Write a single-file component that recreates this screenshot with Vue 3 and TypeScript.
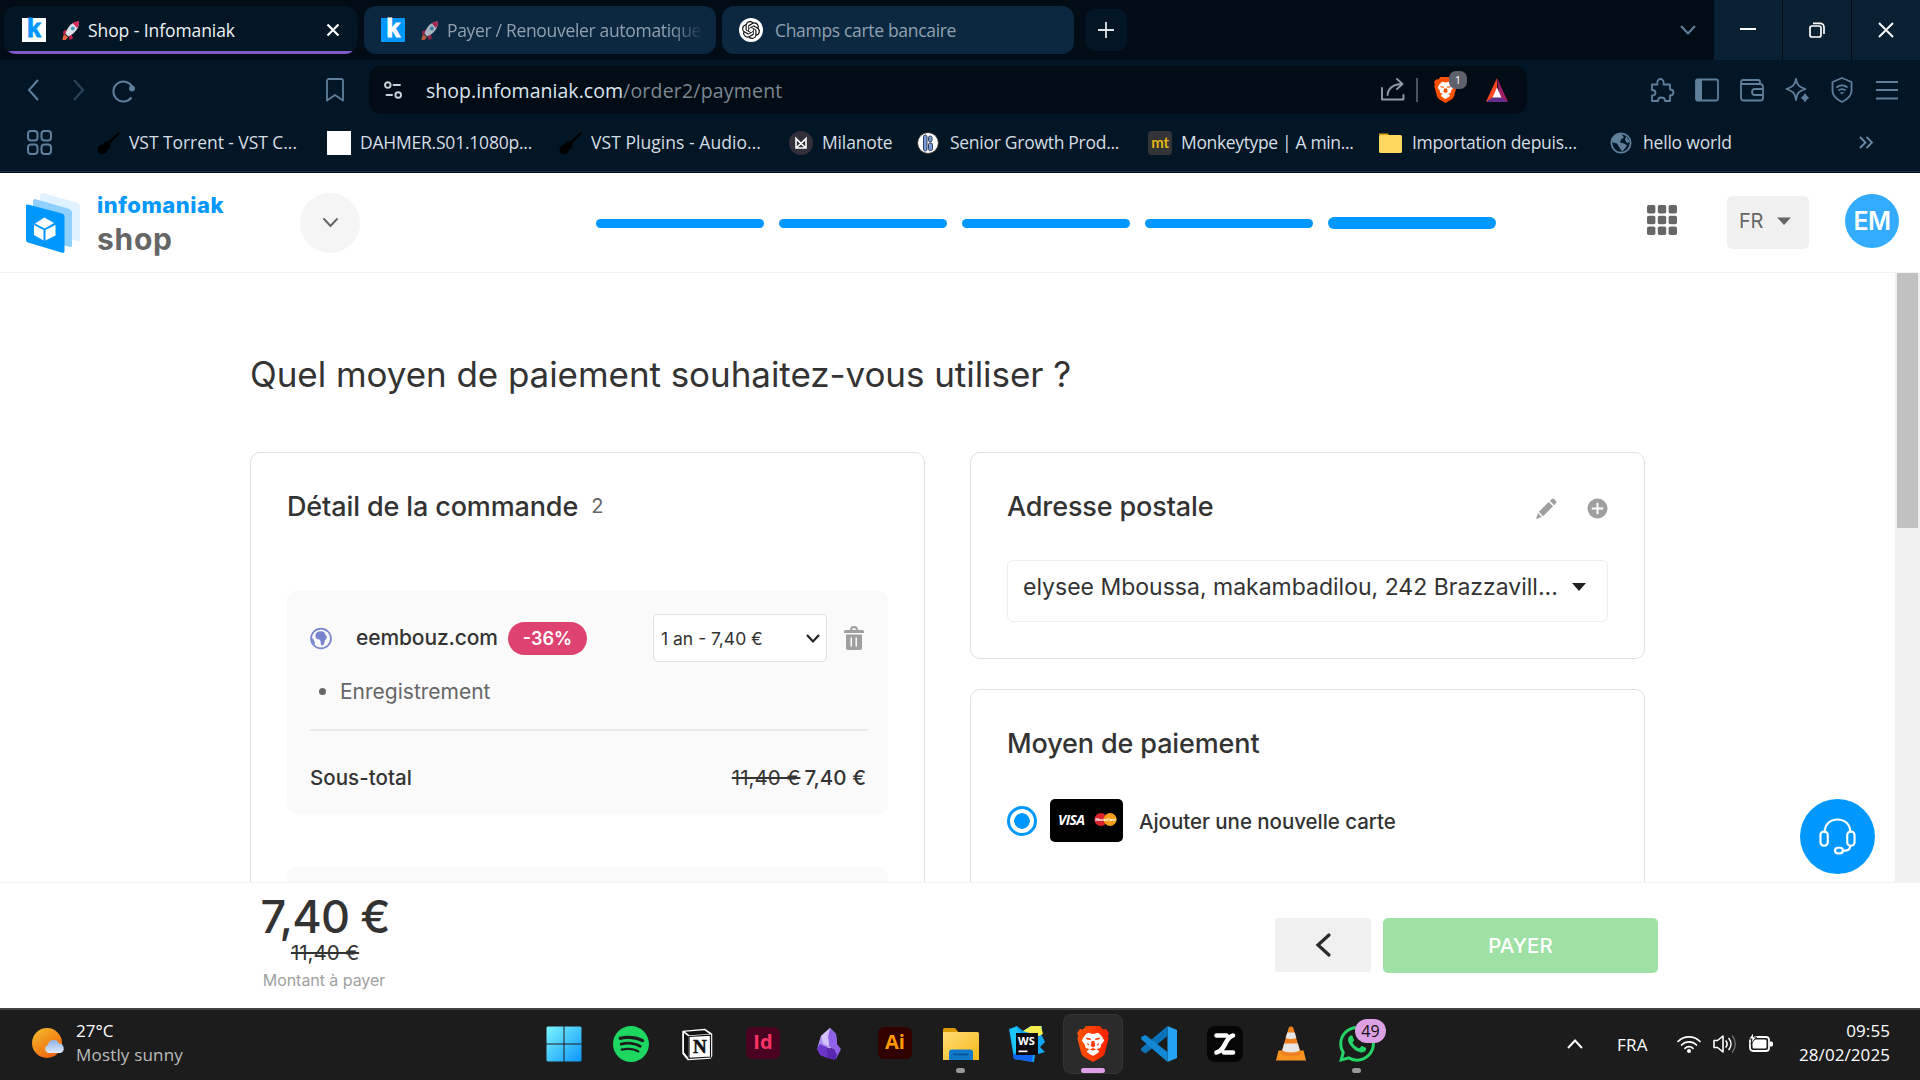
<script setup lang="ts">
interface Bookmark {
  icon: string
  label: string
  width: number
  tracking: number
}

const bookmarks: Bookmark[] = [
  { icon: 'guitar', label: 'VST Torrent - VST C...', width: 231, tracking: -0.06 },
  { icon: 'blank', label: 'DAHMER.S01.1080p...', width: 231, tracking: -0.22 },
  { icon: 'guitar', label: 'VST Plugins - Audio...', width: 231, tracking: 0.05 },
  { icon: 'milanote', label: 'Milanote', width: 128, tracking: -0.15 },
  { icon: 'senior', label: 'Senior Growth Prod...', width: 231, tracking: -0.28 },
  { icon: 'monkey', label: 'Monkeytype | A min...', width: 231, tracking: -0.35 },
  { icon: 'folder', label: 'Importation depuis...', width: 231, tracking: -0.27 },
  { icon: 'globe', label: 'hello world', width: 160, tracking: -0.2 },
]

const taskIcons = ['windows', 'spotify', 'notion', 'indesign', 'obsidian', 'illustrator', 'explorer', 'webstorm', 'brave', 'vscode', 'zed', 'vlc', 'whatsapp']

const steps = [1, 2, 3, 4, 5]
</script>

<template>
  <div class="screen">
    <header class="tabstrip">
      <div class="tab active">
        <span class="fav light">k</span>
        <svg class="rocket" viewBox="0 0 18 20"><path d="M4 9L1 11l.5 4L6 12zM10 14.500l1 3.500-3.500 1.500-.5-5z" fill="#c6224e" /><path d="M17 1C11 1 6 5 3.500 13l2.500 3C13 13 17 8 17 1z" fill="#dfe3ea" /><path d="M17 1c-2.500 0-4.500.6-6.300 1.800L15 7.500C16.300 5.700 17 3.500 17 1z" fill="#d8275a" /><circle cx="10.800" cy="8" r="2" fill="#4b9ac4" /><path d="M3 14l3 3-2.500 2.500L.5 19.500 1 16z" fill="#f2683c" /></svg>
        <span class="tabtext">Shop - Infomaniak</span>
        <svg class="tabclose" viewBox="0 0 14 14"><path d="M1.500 1.500l11 11M12.500 1.500l-11 11" stroke="#fff" stroke-width="2.200" /></svg>
      </div>
      <div class="tab">
        <span class="fav dark">k</span>
        <svg class="rocket dim" viewBox="0 0 18 20"><path d="M4 9L1 11l.5 4L6 12zM10 14.500l1 3.500-3.500 1.500-.5-5z" fill="#c6224e" /><path d="M17 1C11 1 6 5 3.500 13l2.500 3C13 13 17 8 17 1z" fill="#dfe3ea" /><path d="M17 1c-2.500 0-4.500.6-6.300 1.800L15 7.500C16.300 5.700 17 3.500 17 1z" fill="#d8275a" /><circle cx="10.800" cy="8" r="2" fill="#4b9ac4" /><path d="M3 14l3 3-2.500 2.500L.5 19.500 1 16z" fill="#f2683c" /></svg>
        <span class="tabtext fade">Payer / Renouveler automatique</span>
      </div>
      <div class="tab">
        <svg class="gpt" viewBox="-4 -4 32 32"><circle cx="12" cy="12" r="16" fill="#fff" /><path d="M22.2819 9.8211a5.9847 5.9847 0 0 0-.5157-4.9108 6.0462 6.0462 0 0 0-6.5098-2.9A6.0651 6.0651 0 0 0 4.9807 4.1818a5.9847 5.9847 0 0 0-3.9977 2.9 6.0462 6.0462 0 0 0 .7427 7.0966 5.98 5.98 0 0 0 .511 4.9107 6.051 6.051 0 0 0 6.5146 2.9001A5.9847 5.9847 0 0 0 13.2599 24a6.0557 6.0557 0 0 0 5.7718-4.2058 5.9894 5.9894 0 0 0 3.9977-2.9001 6.0557 6.0557 0 0 0-.7475-7.0729zm-9.022 12.6081a4.4755 4.4755 0 0 1-2.8764-1.0408l.1419-.0804 4.7783-2.7582a.7948.7948 0 0 0 .3927-.6813v-6.7369l2.02 1.1686a.071.071 0 0 1 .038.052v5.5826a4.504 4.504 0 0 1-4.4945 4.4944zm-9.6607-4.1254a4.4708 4.4708 0 0 1-.5346-3.0137l.142.0852 4.783 2.7582a.7712.7712 0 0 0 .7806 0l5.8428-3.3685v2.3324a.0804.0804 0 0 1-.0332.0615L9.74 19.9502a4.4992 4.4992 0 0 1-6.1408-1.6464zM2.3408 7.8956a4.485 4.485 0 0 1 2.3655-1.9728V11.6a.7664.7664 0 0 0 .3879.6765l5.8144 3.3543-2.0201 1.1685a.0757.0757 0 0 1-.071 0l-4.8303-2.7865A4.504 4.504 0 0 1 2.3408 7.872zm16.5963 3.8558L13.1038 8.364 15.1192 7.2a.0757.0757 0 0 1 .071 0l4.8303 2.7913a4.4944 4.4944 0 0 1-.6765 8.1042v-5.6772a.79.79 0 0 0-.407-.667zm2.0107-3.0231l-.142-.0852-4.7735-2.7818a.7759.7759 0 0 0-.7854 0L9.409 9.2297V6.8974a.0662.0662 0 0 1 .0284-.0615l4.8303-2.7866a4.4992 4.4992 0 0 1 6.6802 4.66zM8.3065 12.863l-2.02-1.1638a.0804.0804 0 0 1-.038-.0567V6.0742a4.4992 4.4992 0 0 1 7.3757-3.4537l-.142.0805L8.704 5.459a.7948.7948 0 0 0-.3927.6813zm1.0976-2.3654l2.602-1.4998 2.6069 1.4998v2.9994l-2.5974 1.4997-2.6067-1.4997Z" fill="#111" /></svg>
        <span class="tabtext">Champs carte bancaire</span>
      </div>
      <button class="newtab" aria-label="Nouvel onglet"><svg viewBox="0 0 16 16"><path d="M8 0v16M0 8h16" stroke="#dfe4e8" stroke-width="1.800" /></svg></button>
      <svg class="tabmenu" viewBox="0 0 16 10"><path d="M1 1l7 7.500L15 1" fill="none" stroke="#5f7f9a" stroke-width="2" /></svg>
      <div class="winbtns">
        <span><svg viewBox="0 0 16 16"><path d="M0 7h16" stroke="#fff" stroke-width="2" /></svg></span>
        <span><svg viewBox="0 0 16 16"><rect x="1" y="4" width="11" height="11" rx="2" fill="none" stroke="#fff" stroke-width="1.700" /><path d="M4 1.300h7a4 4 0 0 1 4 4V12" fill="none" stroke="#fff" stroke-width="1.700" /></svg></span>
        <span><svg viewBox="0 0 16 16"><path d="M1 1l14 14M15 1L1 15" stroke="#fff" stroke-width="1.900" /></svg></span>
      </div>
    </header>

    <div class="toolbar">
      <svg class="nav back" viewBox="0 0 12 22"><path d="M11 1L2 11l9 10" /></svg>
      <svg class="nav fwd" viewBox="0 0 12 22"><path d="M1 1l9 10-9 10" /></svg>
      <svg class="reload" viewBox="0 0 24 24"><path d="M19 19.500A10 10 0 1 1 20 8" fill="none" stroke="#5f7f9a" stroke-width="2" stroke-linecap="round" /><circle cx="20" cy="10" r="3" fill="#5f7f9a" /></svg>
      <svg class="bm" viewBox="0 0 18 24"><path d="M1 22.500V3a2 2 0 0 1 2-2h12a2 2 0 0 1 2 2v19.500l-8-5.500z" fill="none" stroke="#5f7f9a" stroke-width="1.800" stroke-linejoin="round" /></svg>
      <div class="omnibox">
        <svg class="tune" viewBox="0 0 18 18"><g fill="none" stroke="#c9d3dc" stroke-width="1.900" stroke-linecap="round"><circle cx="3.800" cy="4" r="2.800" /><path d="M9.500 4H16M2.500 14H8" /><circle cx="14.200" cy="14" r="2.800" /></g></svg>
        <span class="host">shop.infomaniak.com</span><span class="path">/order2/payment</span>
        <svg class="share" viewBox="0 0 24 24"><g fill="none" stroke="#8f99a3" stroke-width="1.900" stroke-linecap="round" stroke-linejoin="round"><path d="M1 10v11.500h21.500V17" /><path d="M6.500 17C7 10 13 6 21 6M16 1l5.500 5-5.500 5" /></g></svg>
        <i class="vbar"></i>
        <div class="braveshield">
          <svg viewBox="0 0 32 36"><path d="M9 0h14l3 3.500 3-.5 3 4-1.200 3 .8 2.500-3.600 14c-.6 2-1.600 3.300-3.200 4.400L16 36l-8.800-5.100c-1.600-1.100-2.600-2.400-3.200-4.400L.4 12.500 1.200 10 0 7l3-4 3 .5z" fill="#ff5000" /><path d="M16 7.500l4.500-1c3 2 4.800 4.500 6.300 8-.4 1.800-2.800 3-3 4.800.4 2-.6 3.600-4.300 3.700l3 2.500c-1 1.600-4.500 3.800-6.500 5-2-1.200-5.500-3.400-6.500-5l3-2.500c-3.700-.1-4.700-1.700-4.300-3.700-.2-1.800-2.600-3-3-4.800 1.500-3.500 3.300-6 6.300-8z" fill="#fff" /><path d="M8 12.500l6 1v1.500l-4-.5zM24 12.500l-6 1v1.500l4-.5zM14 16h4l1 4.500-3 1.800-3-1.800z" fill="#ff5000" /></svg>
          <b>1</b>
        </div>
        <svg class="bat" viewBox="0 0 26 28"><path d="M13 0L0 28l10-5z" fill="#ff4724" /><path d="M13 0l13 28-10-5z" fill="#9e1f63" /><path d="M0 28l8-5.500h10L26 28z" fill="#662d91" /><path d="M13 0l-5 23 5-11z" fill="#ff4724" /><path d="M13 11l5.200 11.800H7.800z" fill="#fff" /></svg>
      </div>
      <div class="ext">
        <svg viewBox="0 0 24 24"><path d="M2 6.500h5.500c-1-3 .8-5.500 3-5.500s4 2.500 3 5.500H20v5c3 0 3.500 1.500 3.500 3s-1 3-3.500 3V23h-5c0-2.500-1.500-3.500-3.500-3.500S8 20.500 8 23H2v-5.500c2 0 3.500-1 3.500-2.700S4 12 2 12z" /></svg>
        <svg viewBox="0 0 24 24"><rect x="1" y="1.500" width="22" height="21" rx="1.500" /><path d="M1 2h6v20H1z" fill="#5f7f9a" stroke="none" /></svg>
        <svg viewBox="0 0 24 24"><path d="M1 6V4a2 2 0 0 1 2-2h15a2 2 0 0 1 2 2v2M1 6v14a2.500 2.500 0 0 0 2.500 2.500h17A2.500 2.500 0 0 0 23 20V9a3 3 0 0 0-3-3zM23 11h-8a2.500 2.500 0 0 0 0 6h8" /></svg>
        <svg viewBox="0 0 24 24"><path d="M11 1c1 6 2.500 7.800 9.500 10-7 2.200-8.500 4-9.500 11-1-7-3-8.800-9.500-11C8 8.800 10 7 11 1z" /><path d="M20 16.500c.4 2 1 2.600 3 3.300-2 .6-2.600 1.200-3 3.200-.4-2-1-2.600-3-3.200 2-.7 2.600-1.300 3-3.300z" fill="#5f7f9a" /></svg>
        <svg viewBox="0 0 24 24"><path d="M12 0l9.500 4v9c0 5-4.500 8.500-9.500 11-5-2.500-9.500-6-9.500-11V4z" /><path d="M6.500 9.500a8 8 0 0 1 11 0M8.500 12.500a5.500 5.500 0 0 1 7 0M10.500 15.300a3 3 0 0 1 3 0" /></svg>
        <svg viewBox="0 0 24 24"><path d="M1 4h22M1 12h22M1 20.500h22" /></svg>
      </div>
    </div>

    <nav class="bookmarks">
      <svg class="apps" viewBox="0 0 26 26"><g fill="none" stroke="#5f7f9a" stroke-width="2"><rect x="1" y="1" width="9.500" height="9.500" rx="3" /><rect x="14.500" y="1" width="9.500" height="9.500" rx="3" /><rect x="1" y="14.500" width="9.500" height="9.500" rx="3" /><rect x="14.500" y="14.500" width="9.500" height="9.500" rx="3" /></g></svg>
      <div v-for="b in bookmarks" :key="b.label" class="bk" :style="{ width: b.width + 'px', letterSpacing: b.tracking + 'px' }">
        <svg v-if="b.icon === 'guitar'" viewBox="0 0 24 24"><path d="M22.500 1l1.200 1.600L14 13c1.200 3-.6 4.400-2.200 5.200-.8 4-3.600 5.600-6.800 5-3.600-1-4.600-5-2-8 1.200-1.200 3-1.200 3.800-2 1-2.200 3-3.600 5.400-2.600z" fill="#000" /></svg>
        <span v-else-if="b.icon === 'blank'" class="blankfav"></span>
        <svg v-else-if="b.icon === 'milanote'" viewBox="0 0 24 24"><circle cx="12" cy="12" r="12" fill="#33303c" /><path d="M7 17V7.500l5 5 5-5V17zM7 17l10-9M17 17L7 8" fill="none" stroke="#fff" stroke-width="1.600" /></svg>
        <svg v-else-if="b.icon === 'senior'" viewBox="0 0 24 24"><circle cx="11" cy="12" r="10.500" fill="#fff" stroke="#332b28" /><g fill="#7a9be0" stroke="#30384d" stroke-width="1"><rect x="6.500" y="4" width="3.500" height="16" rx="1.700" /><rect x="11.500" y="5" width="3.500" height="6" rx="1.700" /><rect x="11.500" y="12" width="4" height="7.500" rx="1.700" /></g></svg>
        <span v-else-if="b.icon === 'monkey'" class="mt">mt</span>
        <svg v-else-if="b.icon === 'folder'" viewBox="0 0 24 24"><path d="M0 2.500h9l1 2H0z" fill="#e0a10c" /><rect y="4" width="23" height="18" rx="1.500" fill="#ffd75e" /></svg>
        <svg v-else viewBox="0 0 24 24"><circle cx="11" cy="12" r="9.600" fill="none" stroke="#5f7f9a" stroke-width="1.800" /><path d="M11 2.500l3 4-3 2-1 3 4 1 3 2-2 3-3 3-2-3-3-5-4-1-2-2C1.500 6 6 2 11 2.500zM16 5l4 6-3 1-2-3z" fill="#5f7f9a" /></svg>
        <span class="bktext">{{ b.label }}</span>
      </div>
      <svg class="more" viewBox="0 0 14 12"><path d="M1 .5L6.500 6 1 11.500M7.500.5L13 6l-5.500 5.500" fill="none" stroke="#6d8ba5" stroke-width="1.800" /></svg>
    </nav>

    <section class="pagehead">
      <svg class="logo" viewBox="0 0 54 60"><path d="M17 0l33 9.500c2.500.8 4 2 4 4.500v33c0 1-1 1.500-2 1.200L14 38V3c0-2 1-3.500 3-3z" fill="#e0f1ff" /><path d="M9 6l33 9.500c2.500.8 4 2 4 4v33c0 1.200-1 1.800-2 1.500L7 44V8.500C7 7 7.600 5.700 9 6z" fill="#8fd0ff" /><path d="M2 11.500l34 9c1.600.6 2.500 1.500 2.500 3V58c0 1.500-1 2.300-2.500 1.800L2 49.500C.6 49 0 48.500 0 47V13c0-1.200.8-1.900 2-1.500z" fill="#0098ff" /><path d="M18.500 24.500l9.500 5.500-9.200 5.500L9 30.500zM8 32l9.500 5v10.500L8 42zM29.500 32v10.500l-10 5V37z" fill="#fff" /></svg>
      <div class="brand"><span class="inf">infomaniak</span><span class="shp">shop</span></div>
      <button class="round" aria-label="Ouvrir"><svg viewBox="0 0 15 10"><path d="M1 1l6.500 7L14 1" fill="none" stroke="#666" stroke-width="2" stroke-linecap="round" /></svg></button>
      <div class="steps"><i v-for="s in steps" :key="s" :class="{ big: s === 5 }"></i></div>
      <svg class="grid9" viewBox="0 0 30 30" fill="#666"><g v-for="r in 3" :key="r"><rect v-for="c in 3" :key="c" :x="(c - 1) * 10.800" :y="(r - 1) * 10.700" width="8.400" height="8.600" rx="1.800" /></g></svg>
      <button class="lang"><span>FR</span><svg viewBox="0 0 14 8"><path d="M0 .5h14L7 8z" fill="#666" /></svg></button>
      <div class="avatar"><span>EM</span></div>
    </section>

    <div class="viewport">
      <main class="content">
        <h1>Quel moyen de paiement souhaitez-vous utiliser ?</h1>
        <div class="cols">
          <section class="card left">
            <h2><span>Détail de la commande</span><small>2</small></h2>
            <div class="item">
              <div class="row">
                <svg class="earth" viewBox="0 0 24 24"><circle cx="12" cy="12" r="10.800" fill="none" stroke="#7884d0" stroke-width="1.900" /><path d="M6 8c.4-2.500 2.500-4 5.500-4 3-.2 4.500 1 5 3 .6 1.700 2.200 2 2 3.700-.3 1.800-2.500 2.800-2.700 5-.3 2.200-1.300 3.800-3 4-1.400-.5-.8-3-1.300-4.700-.6-1.500-1-2.200-3-2.200C6.700 12.500 5.600 10.800 6 8z" fill="#7884d0" /><path d="M1.500 11c2 1 4 4 4 8-2.500-1.500-4-4.500-4-8z" fill="#7884d0" /></svg>
                <span class="domain med">eembouz.com</span>
                <span class="badge">-36%</span>
                <div class="select"><span>1 an - 7,40 €</span><svg viewBox="0 0 14 9"><path d="M1 1l6 6.500L13 1" fill="none" stroke="#222" stroke-width="2.200" /></svg></div>
                <svg class="trash" viewBox="0 0 20 24" fill="#9f9f9f"><path d="M6 4a4 4 0 0 1 8 0h4.500A1.500 1.500 0 0 1 20 5.500V7H0V5.500A1.500 1.500 0 0 1 1.500 4zm2 0h4a2 2 0 0 0-4 0z" /><path d="M2 8.500h16V22a2 2 0 0 1-2 2H4a2 2 0 0 1-2-2zM6.500 11.500v9h1.500v-9zm5 0v9H13v-9z" fill-rule="evenodd" /></svg>
              </div>
              <div class="sub"><i></i><span>Enregistrement</span></div>
              <hr>
              <div class="total med"><span>Sous-total</span><s>11,40 €</s><span class="now">7,40 €</span></div>
            </div>
            <div class="item next"></div>
          </section>
          <div class="right">
            <section class="card addr">
              <h2><span>Adresse postale</span>
                <svg class="pencil" viewBox="0 0 22 22" fill="#9f9f9f"><path d="M16 1.500a2.500 2.500 0 0 1 3.500 0l1 1a2.500 2.500 0 0 1 0 3.500L19 7.500 14.500 3zM13.300 4.200l4.500 4.500L7.500 19 3 14.500zM2.200 16l3.800 3.800L0 22z" /></svg>
                <svg class="plus" viewBox="0 0 22 22"><circle cx="11" cy="11" r="10.500" fill="#9f9f9f" /><path d="M11 5v12M5 11h12" stroke="#fff" stroke-width="2" /></svg>
              </h2>
              <div class="addrselect"><span>elysee Mboussa, makambadilou, 242 Brazzavill...</span><svg viewBox="0 0 14 8"><path d="M0 0h14L7 8z" fill="#222" /></svg></div>
            </section>
            <section class="card pay">
              <h2><span>Moyen de paiement</span></h2>
              <div class="method">
                <i class="radio"></i>
                <div class="cc"><em>VISA</em><svg viewBox="0 0 24 14"><circle cx="7" cy="7" r="7" fill="#d8232a" /><circle cx="17" cy="7" r="7" fill="#f79e1b" /><text x="12" y="8.800" text-anchor="middle" fill="#fff" font-family="Liberation Sans" font-weight="700" font-style="italic" font-size="4.500" textLength="22">MasterCard</text></svg></div>
                <span class="med newcard">Ajouter une nouvelle carte</span>
              </div>
            </section>
          </div>
        </div>
      </main>
      <div class="track"><i></i></div>
      <button class="help" aria-label="Aide"><svg viewBox="0 0 38 38"><g fill="none" stroke="#fff" stroke-width="2.200" stroke-linecap="round" stroke-linejoin="round"><path d="M6 14.500V14C6 6.500 11.500 1.500 19 1.500S32 6.500 32 14v.5" /><rect x="1.500" y="14" width="7.500" height="14.500" rx="3.500" /><rect x="29" y="14" width="7.500" height="14.500" rx="3.500" /><path d="M32 28.500c0 3-2 5-5 5h-2.500" /><rect x="16.500" y="30.500" width="8" height="5.800" rx="2.900" /></g></svg></button>
    </div>

    <footer class="paybar">
      <div class="amount"><strong>7,40 €</strong><s>11,40 €</s><span>Montant à payer</span></div>
      <button class="prev" aria-label="Retour"><svg viewBox="0 0 16 24"><path d="M14 2L3 12l11 10" fill="none" stroke="#2b2b2b" stroke-width="3.200" stroke-linecap="round" /></svg></button>
      <button class="payer">PAYER</button>
    </footer>

    <div class="taskbar">
      <svg class="sun" viewBox="0 0 34 32"><defs><linearGradient id="sg" x1="0" y1="0" x2=".7" y2="1"><stop offset="0" stop-color="#f5c02e" /><stop offset="1" stop-color="#f0620c" /></linearGradient><linearGradient id="cg" x1="0" y1="0" x2="0" y2="1"><stop offset="0" stop-color="#8fb4ee" /><stop offset="1" stop-color="#dfe9fb" /></linearGradient></defs><circle cx="15" cy="15" r="15" fill="url(#sg)" /><path d="M16.500 25a4.300 4.300 0 0 1-.5-8.200 5.800 5.800 0 0 1 11-1.300 4.900 4.900 0 0 1 1.500 9.500z" fill="url(#cg)" /></svg>
      <div class="weather"><span>27°C</span><span class="cond">Mostly sunny</span></div>
      <div class="dock">
        <div v-for="t in taskIcons" :key="t" class="cell" :class="t">
          <svg v-if="t === 'windows'" viewBox="0 0 36 36"><defs><linearGradient id="wg" gradientUnits="userSpaceOnUse" x1="0" y1="0" x2="36" y2="36"><stop offset="0" stop-color="#7df5ff" /><stop offset="1" stop-color="#0a95fb" /></linearGradient></defs><path d="M1.500.5h16v17H.5v-16zM18.500.5h16l1 1v16h-17zM.5 18.500h17v17h-16l-1-1zM18.500 18.500h17v16l-1 1h-16z" fill="url(#wg)" /></svg>
          <svg v-else-if="t === 'spotify'" viewBox="0 0 24 24"><path d="M12 0C5.4 0 0 5.400 0 12s5.400 12 12 12 12-5.400 12-12S18.660 0 12 0zm5.521 17.340c-.24.359-.66.48-1.021.24-2.820-1.740-6.360-2.101-10.561-1.141-.418.122-.779-.179-.899-.539-.12-.421.18-.78.54-.9 4.560-1.021 8.520-.6 11.640 1.320.42.18.479.659.301 1.020zm1.440-3.300c-.301.42-.841.6-1.262.3-3.239-1.980-8.159-2.580-11.939-1.380-.479.12-1.020-.12-1.140-.6-.12-.48.12-1.021.6-1.141C9.600 9.900 15 10.561 18.720 12.840c.361.181.54.78.241 1.200zm.12-3.360C15.240 8.400 8.820 8.160 5.160 9.301c-.6.179-1.200-.181-1.380-.721-.18-.601.18-1.200.72-1.381 4.260-1.260 11.280-1.020 15.721 1.621.539.3.719 1.020.419 1.560-.299.421-1.020.599-1.559.3z" fill="#1ed760" /></svg>
          <div v-else-if="t === 'notion'" class="notionbox"><svg viewBox="0 0 36 36"><path d="M4 5.500l22-2L32.500 8v22l-1.500 2-22 1.500L4 27.500z" fill="#fff" stroke="#fff" stroke-width="1.500" stroke-linejoin="round" /><path d="M5 7l4.500 3.500V32L5 26.500zM6 5.800l19.500-1.500 5 3.600-20 1.300z" fill="#111" /><path d="M10 10.500l21.500-1.300V31L10 32.300z" fill="#fff" stroke="#111" stroke-width="1.200" /></svg><b>N</b></div>
          <span v-else-if="t === 'indesign'" class="adobe id">Id</span>
          <svg v-else-if="t === 'obsidian'" viewBox="0 0 36 36"><path d="M19 2l6 6 1 9-7 6-10-4 1-9z" fill="#b79cf5" /><path d="M19 2l6 6 1 10 4 5-5 10-3-9-4-5-1-9z" fill="#8f62e8" /><path d="M10 10l3 6-2 6-5 2 2-8z" fill="#a88cf0" /><path d="M6 23l3-5 7 3 2 5-2 6-7-3z" fill="#6c35c9" /><path d="M16 22l7 1 3 6-2 5-8-2z" fill="#5a28b0" /><path d="M19 2l-2 9 1 9-6-3-2-7z" fill="#d3c3fb" /></svg>
          <span v-else-if="t === 'illustrator'" class="adobe ai">Ai</span>
          <svg v-else-if="t === 'explorer'" viewBox="0 0 36 36"><defs><linearGradient id="fg" x1="0" y1="0" x2="1" y2="1"><stop offset="0" stop-color="#ffde74" /><stop offset="1" stop-color="#f9b71c" /></linearGradient></defs><path d="M0 3.500A1.500 1.500 0 0 1 1.500 2H12l3 3.500V8H0z" fill="#d99a06" /><path d="M0 6h34.500A1.500 1.500 0 0 1 36 7.500V34H0z" fill="url(#fg)" /><path d="M6 34V26.500a3 3 0 0 1 3-3h18a3 3 0 0 1 3 3V34z" fill="#0f78c8" /><path d="M10.500 28.500h15" stroke="#0a4f8d" stroke-width="1.500" /></svg>
          <div v-else-if="t === 'webstorm'" class="wsbox"><svg viewBox="0 0 36 36"><path d="M0 3l8-3 6 5 8-5h11l-1 8 4 8-5 5 5 5-10 3-1 7-20-3z" fill="#10a8f5" /><path d="M14 5l8-5h10l2 8-4 2z" fill="#f3ee4f" /><path d="M1 4l6-3 4 5-2 18-4 4z" fill="#1cc7f5" /><path d="M4 28l20 1-1 7-18-3z" fill="#1264f0" /><rect x="7" y="7" width="22" height="22" fill="#0b0b0f" /><rect x="9.500" y="24.500" width="9" height="1.700" fill="#fff" /></svg><b>WS</b></div>
          <svg v-else-if="t === 'brave'" viewBox="0 0 32 36"><defs><linearGradient id="bg" x1="0" x2="1"><stop offset="0" stop-color="#ff5500" /><stop offset="1" stop-color="#ff2000" /></linearGradient></defs><path d="M9 0h14l3 3.500 3-.5 3 4-1.200 3 .8 2.500-3.600 14c-.6 2-1.600 3.300-3.200 4.400L16 36l-8.800-5.100c-1.600-1.100-2.600-2.400-3.200-4.400L.4 12.500 1.200 10 0 7l3-4 3 .5z" fill="url(#bg)" /><path d="M16 8l5-1.200c2.800 1.800 4.600 4.300 6.100 7.700-.4 1.800-3 3.300-3.300 5 .4 2-.8 3.200-4.300 3.500l3 2.500c-1 1.400-4.500 3.300-6.500 4.300-2-1-5.500-2.900-6.500-4.300l3-2.500c-3.500-.3-4.700-1.500-4.300-3.500-.3-1.700-2.900-3.200-3.300-5C6.400 11.100 8.200 8.600 11 6.800z" fill="#fff" /><path d="M8.500 11.500l5.500 1-.5 1.500-3.500-.5zM23.500 11.500l-5.500 1 .5 1.500 3.500-.5zM14.600 15h2.800l.8 5-2.200 1.600-2.200-1.600zM9.500 17l3 1.500-1.500 1zM22.500 17l-3 1.500 1.500 1zM12.500 23.500l3.500-1.500 3.500 1.500-3.500 1z" fill="#ff3c00" /></svg>
          <svg v-else-if="t === 'vscode'" viewBox="0 0 36 36"><path d="M26.500 0L36 4v28l-9.500 4z" fill="#24a3f2" /><path d="M26.500 0v10L4.500 27.500 0 24.800v-2.500z" fill="#0c72b8" /><path d="M4.500 9L26.500 26v10L.5 13.500 0 11z" fill="#1287d4" /></svg>
          <svg v-else-if="t === 'zed'" viewBox="0 0 36 36"><rect width="36" height="36" rx="8" fill="#060606" /><path d="M9.500 9.500h10M26 9.500C18 11 18.500 25 9.500 26.500M17 26.500h9" fill="none" stroke="#fff" stroke-width="4.600" stroke-linecap="round" stroke-linejoin="round" /></svg>
          <svg v-else-if="t === 'vlc'" viewBox="0 0 36 36"><path d="M5.500 24.500h25L33 34.500H3z" fill="#f7931e" /><path d="M18 .5c1.300 0 2 .6 2.400 1.800L28 28c-3 3-17 3-20 0l7.600-25.700C16 1.100 16.700.5 18 .5z" fill="#f08020" /><path d="M14.300 6.500h7.400l1.600 5.500c-3 1.300-7.600 1.300-10.600 0zM11.200 17.500h13.600l2 7c-4 2.600-13.600 2.600-17.600 0z" fill="#e6e6e6" /></svg>
          <template v-else>
            <svg viewBox="0 0 24 24"><path d="M17.472 14.382c-.297-.149-1.758-.867-2.030-.967-.273-.099-.471-.148-.67.15-.197.297-.767.966-.94 1.164-.173.199-.347.223-.644.075-.297-.15-1.255-.463-2.390-1.475-.883-.788-1.480-1.761-1.653-2.059-.173-.297-.018-.458.13-.606.134-.133.298-.347.446-.52.149-.174.198-.298.298-.497.099-.198.05-.371-.025-.52-.075-.149-.669-1.612-.916-2.207-.242-.579-.487-.5-.669-.51-.173-.008-.371-.01-.57-.01-.198 0-.52.074-.792.372-.272.297-1.040 1.016-1.040 2.479 0 1.462 1.065 2.875 1.213 3.074.149.198 2.096 3.200 5.077 4.487.709.306 1.262.489 1.694.625.712.227 1.360.195 1.871.118.571-.085 1.758-.719 2.006-1.413.248-.694.248-1.289.173-1.413-.074-.124-.272-.198-.57-.347m-5.421 7.403h-.004a9.870 9.870 0 01-5.031-1.378l-.361-.214-3.741.982.998-3.648-.235-.374a9.860 9.860 0 01-1.510-5.260c.001-5.450 4.436-9.884 9.888-9.884 2.640 0 5.122 1.030 6.988 2.898a9.825 9.825 0 012.893 6.994c-.003 5.450-4.437 9.884-9.885 9.884m8.413-18.297A11.815 11.815 0 0012.050 0C5.495 0 .16 5.335.157 11.892c0 2.096.547 4.142 1.588 5.945L.057 24l6.305-1.654a11.882 11.882 0 005.683 1.448h.005c6.554 0 11.890-5.335 11.893-11.893a11.821 11.821 0 00-3.480-8.413z" fill="#25d366" /></svg>
            <span class="count">49</span>
          </template>
        </div>
      </div>
      <div class="tray">
        <svg class="up" viewBox="0 0 16 10"><path d="M1 9l7-7.500L15 9" fill="none" stroke="#fff" stroke-width="1.900" /></svg>
        <span class="kbd">FRA</span>
        <svg class="wifi" viewBox="0 0 24 18"><g fill="none" stroke="#fff" stroke-width="1.700" stroke-linecap="round"><path d="M1 6.500a15.500 15.500 0 0 1 22 0M4.500 10a10.500 10.500 0 0 1 15 0M8 13.300a5.800 5.800 0 0 1 8 0" /></g><circle cx="12" cy="16" r="2" fill="#fff" /></svg>
        <svg class="vol" viewBox="0 0 24 20"><g fill="none" stroke="#fff" stroke-width="1.600" stroke-linejoin="round" stroke-linecap="round"><path d="M1 6.500v7h3.500L10 18V2L4.500 6.500zM13 7a5 5 0 0 1 0 6M16 4.500a9 9 0 0 1 0 11" /><path d="M19.500 2a13 13 0 0 1 0 16" stroke="#666" /></g></svg>
        <svg class="batt" viewBox="0 0 24 20"><rect x="1" y="5" width="19" height="14" rx="3" fill="none" stroke="#fff" stroke-width="1.800" /><rect x="3.500" y="7.500" width="14" height="9" rx="1.500" fill="#fff" /><path d="M21 9.500h1.500a1.500 1.500 0 0 1 1.500 1.500v2a1.500 1.500 0 0 1-1.500 1.500H21z" fill="#fff" /><path d="M4.500 0L0 7h3l-1 5 5.500-7H4.500z" fill="#fff" stroke="#1c1c1c" stroke-width="1" /></svg>
        <div class="clock"><span>09:55</span><span>28/02/2025</span></div>
      </div>
    </div>
  </div>
</template>

<style scoped>
.screen { width: 1920px; height: 1080px; overflow: hidden; display: flex; flex-direction: column; background: #fff; font-family: Inter, "Liberation Sans", sans-serif; color: #333; position: relative; }
.screen * { box-sizing: border-box; }
span, s, strong, b, em { white-space: nowrap; }
button { border: 0; padding: 0; font: inherit; display: flex; align-items: center; justify-content: center; flex: none; }
svg { display: block; flex: none; overflow: visible; }
h1, h2 { margin: 0; font-weight: 400; }

.tabstrip { height: 60px; background: #010c17; display: flex; align-items: center; padding-left: 4px; flex: none; font-family: "Open Sans", sans-serif; }
.tab { width: 352px; height: 48px; margin-right: 6px; border-radius: 12px; background: #0c2840; display: flex; align-items: center; padding: 0 17px; color: #90a0af; font-size: 17.500px; letter-spacing: -.32px; }
.tab.active { width: 353px; margin-right: 7px; background: linear-gradient(#021625 45px, #8459c9 45px); color: #eef2f6; letter-spacing: -.08px; padding-left: 18px; }
.tabtext { padding-bottom: 1px; }
.fav { width: 24px; height: 24px; flex: none; text-align: center; font: 700 25px/21px "Liberation Sans", sans-serif; -webkit-text-stroke: 1px currentColor; }
.fav.light { background: #fff; color: #0098ff; }
.fav.dark { background: #0098ff; color: #fff; }
.rocket { width: 18px; height: 21px; margin: 0 8px 0 16px; }
.rocket.dim { opacity: .75; }
.tabclose { width: 14px; height: 14px; margin-left: auto; }
.fade { -webkit-mask-image: linear-gradient(90deg, #000 88%, transparent 101%); mask-image: linear-gradient(90deg, #000 88%, transparent 101%); }
.gpt { width: 24px; height: 24px; margin-right: 12px; }
.newtab { width: 42px; height: 42px; border-radius: 10px; background: #021625; margin-left: 5px; }
.newtab svg { width: 16px; height: 16px; }
.tabmenu { width: 16px; height: 10px; margin-left: auto; margin-right: 18px; }
.winbtns { display: flex; height: 60px; gap: 1px; }
.winbtns span { width: 68px; background: #0a2134; display: flex; align-items: center; justify-content: center; }
.winbtns svg { width: 16px; height: 16px; }

.toolbar { height: 60px; background: #021625; display: flex; align-items: center; flex: none; padding-left: 27px; font-family: "Open Sans", sans-serif; }
.nav { width: 12px; height: 22px; fill: none; stroke: #5f7f9a; stroke-width: 2; }
.fwd { margin-left: 34px; opacity: .45; }
.reload { width: 24px; height: 25px; margin-left: 27px; }
.bm { width: 18px; height: 24px; margin-left: 190px; }
.omnibox { width: 1158px; height: 48px; border-radius: 12px; background: #010c17; margin-left: 25px; display: flex; align-items: center; padding-left: 15px; font-size: 19.500px; }
.tune { width: 18px; height: 18px; margin-right: 24px; }
.host { color: #dce6ef; letter-spacing: .04px; }
.path { color: #7d8891; letter-spacing: .2px; }
.share { width: 24px; height: 24px; margin-left: auto; }
.vbar { width: 2px; height: 24px; background: #4a5560; margin: 0 16px 0 11px; }
.braveshield { position: relative; width: 23px; height: 28px; margin-right: 27px; }
.braveshield svg { width: 23px; height: 28px; }
.braveshield b { position: absolute; left: 15px; top: -5px; width: 18px; height: 18px; border-radius: 7px; background: #5e616b; color: #fff; font: 400 11px/18px "Open Sans", sans-serif; text-align: center; }
.bat { width: 26px; height: 24px; margin-right: 17px; }
.ext { display: flex; margin-left: 123px; gap: 21px; }
.ext svg { width: 24px; height: 24px; fill: none; stroke: #5f7f9a; stroke-width: 1.800; stroke-linejoin: round; }

.bookmarks { height: 53px; background: #021625; border-bottom: 1px solid #010c17; box-shadow: inset 0 -1px 0 #1b3247; display: flex; align-items: center; flex: none; padding: 0 0 7px 27px; font-family: "Open Sans", sans-serif; color: #d5dee6; font-size: 17.500px; }
.apps { width: 26px; height: 26px; margin-right: 43px; }
.bk { display: flex; align-items: center; flex: none; }
.bk > svg, .blankfav, .mt { width: 24px; height: 24px; margin-right: 9px; flex: none; }
.bktext { padding-bottom: 1px; }
.blankfav { background: #fff; }
.mt { background: #323437; color: #e2b714; border-radius: 4px; font: 700 15px/22px "Lato", sans-serif; text-align: center; }
.more { width: 14px; height: 13px; margin-left: 89px; }

.pagehead { height: 100px; flex: none; border-bottom: 1px solid #f1f1f6; display: flex; padding-left: 26px; }
.logo { width: 54px; height: 60px; margin-top: 20px; }
.brand { width: 202px; margin-left: 17px; padding-top: 17px; font-weight: 700; }
.brand span { display: table; }
.inf { color: #0098ff; font-size: 22px; line-height: 30px; font-weight: 800; letter-spacing: .5px; }
.shp { color: #666; font-size: 30px; line-height: 38px; letter-spacing: .7px; }
.round { width: 60px; height: 60px; border-radius: 50%; background: #f5f5f5; margin: 20px 0 0 1px; }
.round svg { width: 15px; height: 10px; }
.steps { display: flex; gap: 15px; margin: 44px 0 0 236px; height: 12px; align-items: center; }
.steps i { width: 168px; height: 9px; border-radius: 5px; background: #0098ff; }
.steps i.big { height: 12px; border-radius: 6px; }
.grid9 { width: 30px; height: 30px; margin: 32px 0 0 151px; }
.lang { width: 82px; height: 53px; border-radius: 5px; background: #f0f0f0; margin: 23px 0 0 50px; color: #666; font-size: 20px; letter-spacing: -.3px; padding: 0 18px 3px 12px; justify-content: space-between; }
.lang svg { width: 14px; height: 8px; }
.avatar { width: 54px; height: 54px; border-radius: 50%; background: #33abff; margin: 21px 0 0 36px; color: #fff; font-size: 25px; letter-spacing: -.5px; display: flex; align-items: center; justify-content: center; font-weight: 600; }

.viewport { height: 609px; flex: none; display: flex; position: relative; overflow: hidden; }
.content { width: 1895px; padding: 79px 0 0 250px; }
h1 { font-size: 35px; letter-spacing: -.06px; line-height: 44px; height: 100px; }
.cols { display: flex; gap: 45px; }
.card { width: 675px; border: 1px solid #e0e0e0; border-radius: 10px; padding: 36px 36px 0; }
.left { height: 500px; }
h2 { font-size: 27px; letter-spacing: -.13px; height: 34px; display: flex; align-items: center; font-weight: 500; }
h2 small { font-size: 20px; margin-left: 13px; color: #666; font-weight: 400; }
.med { font-weight: 500; }
.item { width: 601px; height: 223px; background: #fafafa; border-radius: 9px; margin-top: 68px; padding: 23px 20px 0 23px; }
.item.next { margin-top: 53px; }
.row { display: flex; align-items: center; height: 48px; font-size: 21px; }
.earth { width: 22px; height: 23px; margin-right: 24px; }
.domain { letter-spacing: -.12px; padding-bottom: 1px; }
.badge { width: 79px; height: 33px; border-radius: 17px; background: #dd4270; color: #fff; font-size: 18px; font-weight: 600; display: flex; align-items: center; justify-content: center; margin-left: 10px; }
.select { width: 174px; height: 48px; border: 1px solid #e0e0e0; border-radius: 5px; background: #fff; margin-left: auto; display: flex; align-items: center; justify-content: space-between; padding: 0 6px 0 7px; font-size: 17.500px; }
.select svg { width: 14px; height: 9px; }
.trash { width: 20px; height: 24px; margin: 0 4px 0 17px; }
.sub { display: flex; align-items: center; height: 30px; margin-top: 14px; color: #666; font-size: 21px; padding-left: 9px; }
.sub i { width: 7px; height: 7px; border-radius: 50%; background: #666; margin-right: 14px; }
hr { margin: 23px 0 0; border: 0; height: 2px; background: #e9e9e9; }
.total { display: flex; height: 30px; margin-top: 31px; align-items: center; font-size: 20.500px; letter-spacing: .05px; padding-right: 2px; }
.total s { margin-left: auto; font-weight: 400; text-decoration-thickness: 2px; }
.now { margin-left: 4px; }
.right { display: flex; flex-direction: column; gap: 30px; }
.addr { height: 207px; }
.pay { height: 300px; }
.pencil { width: 21px; height: 21px; margin-left: auto; margin-top: 4px; }
.plus { width: 21px; height: 21px; margin-left: 30px; margin-top: 4px; }
.addrselect { width: 601px; height: 62px; border: 1px solid #eee; border-radius: 6px; margin-top: 37px; padding: 0 21px 9px 15px; display: flex; align-items: center; justify-content: space-between; font-size: 23px; }
.addrselect svg { width: 14px; height: 8px; }
.method { display: flex; align-items: center; height: 44px; margin-top: 39px; font-size: 20.500px; }
.newcard { letter-spacing: -.04px; }
.radio { width: 30px; height: 30px; border-radius: 50%; border: 3px solid #0098ff; background: radial-gradient(circle, #0098ff 7.500px, #fff 8px); }
.cc { width: 73px; height: 43px; border-radius: 5px; background: #000; margin: 0 16px 1px 13px; display: flex; align-items: center; padding: 0 6px 3px 8px; justify-content: space-between; }
.cc em { color: #fff; font: italic 700 14px "Open Sans", sans-serif; letter-spacing: -.6px; }
.cc svg { width: 23px; height: 13px; }
.track { width: 25px; background: #f0f0f0; padding-left: 2px; }
.track i { display: block; width: 21px; height: 255px; background: #c1c1c1; }
.help { position: absolute; left: 1800px; top: 526px; width: 75px; height: 75px; border-radius: 50%; background: #0098ff; }
.help svg { width: 37px; height: 37px; }

.paybar { height: 126px; border-top: 1px solid #f1f1f6; flex: none; display: flex; padding-left: 261px; }
.amount { width: 128px; display: flex; flex-direction: column; align-items: center; margin-right: 886px; }
.amount strong { font-weight: 500; font-size: 45px; letter-spacing: -.9px; line-height: 50px; margin-top: 9px; }
.amount s { font-size: 20.500px; line-height: 22px; text-decoration-thickness: 2px; }
.amount span { font-size: 16px; line-height: 22px; color: #a0a0a0; margin: 5px 2px 0 0; letter-spacing: -.05px; }
.prev { width: 96px; height: 54px; background: #f0f0f0; border-radius: 3px; margin-top: 35px; }
.prev svg { width: 16px; height: 24px; }
.payer { width: 275px; height: 55px; background: #9fe0a5; border-radius: 5px; color: #fff; font-size: 20.500px; margin: 35px 0 0 12px; font-weight: 500; }

.taskbar { height: 72px; flex: none; background: #1c1c1c; border-top: 2px solid #444; display: flex; font-family: "Open Sans", sans-serif; color: #fff; font-size: 17px; }
.sun { width: 34px; height: 32px; margin: 18px 0 0 32px; }
.weather { width: 464px; padding: 9px 0 0 10px; display: flex; flex-direction: column; align-items: flex-start; line-height: 24px; }
.cond { color: #bdbdbd; letter-spacing: .18px; }
.dock { display: flex; }
.cell { width: 66px; height: 70px; display: flex; justify-content: center; padding-top: 16px; position: relative; }
.cell.windows { width: 68px; }
.cell > svg { width: 36px; height: 36px; }
.brave::before { content: ""; position: absolute; inset: 4px 3px 6px; border-radius: 8px; background: #2b2b2b; border: 1px solid #353535; }
.brave > svg { position: relative; width: 32px; }
.brave::after, .explorer::after, .whatsapp::after { content: ""; position: absolute; left: 21px; top: 58px; width: 24px; height: 5px; border-radius: 3px; background: #dda0e4; }
.explorer::after, .whatsapp::after { left: 28px; width: 9px; background: #999; }
.adobe { width: 34px; height: 32px; margin-top: 1px; border-radius: 6px; font: 700 20px/29px "Open Sans", sans-serif; text-align: center; }
.id { background: #49021f; color: #ff3366; }
.ai { background: #330000; color: #ff9a00; }
.notionbox, .wsbox { width: 36px; height: 36px; position: relative; }
.notionbox b { position: absolute; left: 14px; top: 10px; color: #111; font: 700 19px/22px "Liberation Serif", serif; -webkit-text-stroke: .5px #111; }
.wsbox b { position: absolute; left: 9px; top: 8px; color: #fff; font: 700 11px/13px "Open Sans", sans-serif; }
.count { position: absolute; left: 31px; top: 9px; width: 31px; height: 24px; border-radius: 12px; background: #dda0e4; color: #111; font-size: 16px; line-height: 24px; text-align: center; }
.tray { flex: 1; display: flex; padding-right: 30px; }
.up { width: 16px; height: 10px; margin: 29px 34px 0 177px; }
.kbd { line-height: 24px; margin-top: 23px; letter-spacing: .3px; }
.wifi { width: 24px; height: 18px; margin: 25px 12px 0 29px; }
.vol { width: 24px; height: 20px; margin-top: 24px; }
.batt { width: 24px; height: 20px; margin: 22px 0 0 12px; }
.clock { margin-left: auto; padding-top: 9px; line-height: 24px; display: flex; flex-direction: column; align-items: flex-end; letter-spacing: .08px; }
</style>
